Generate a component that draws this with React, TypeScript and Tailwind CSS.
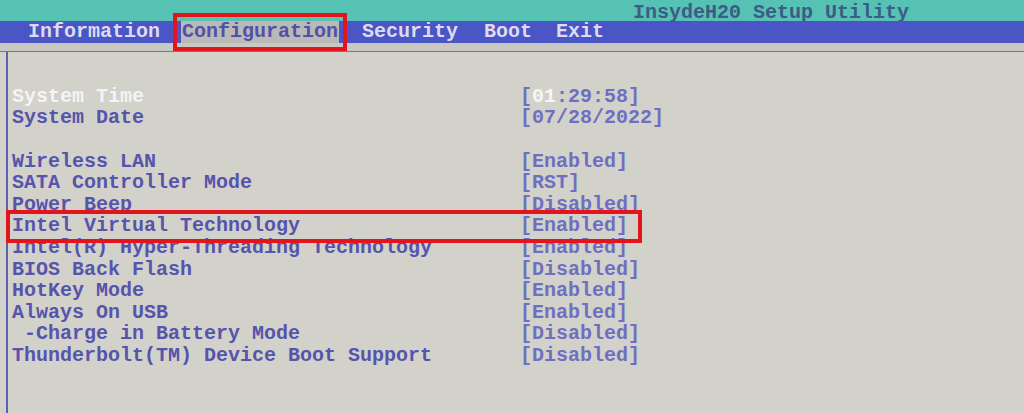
const menu = [
  { label: 'Information', gap: '' },
  { label: 'Configuration', gap: 'ml-[20px]', active: true },
  { label: 'Security', gap: 'ml-[22px]' },
  { label: 'Boot', gap: 'ml-[24px]' },
  { label: 'Exit', gap: 'ml-[22px]' },
];

type Row = { label: string; value: string; selected?: boolean; marked?: boolean } | null;

const rows: Row[] = [
  { label: 'System Time', value: '[01:29:58]', selected: true },
  { label: 'System Date', value: '[07/28/2022]' },
  null,
  { label: 'Wireless LAN', value: '[Enabled]' },
  { label: 'SATA Controller Mode', value: '[RST]' },
  { label: 'Power Beep', value: '[Disabled]' },
  { label: 'Intel Virtual Technology', value: '[Enabled]', marked: true },
  { label: 'Intel(R) Hyper-Threading Technology', value: '[Enabled]' },
  { label: 'BIOS Back Flash', value: '[Disabled]' },
  { label: 'HotKey Mode', value: '[Enabled]' },
  { label: 'Always On USB', value: '[Enabled]' },
  { label: ' -Charge in Battery Mode', value: '[Disabled]' },
  { label: 'Thunderbolt(TM) Device Boot Support', value: '[Disabled]' },
];

function Value({ text, selected }: { text: string; selected?: boolean }) {
  if (selected) {
    // the hour field is the one being edited
    return (
      <span>
        [<span className="text-[#f6f6f6]">01</span>:29:58]
      </span>
    );
  }
  return <span>{text}</span>;
}

export default function App() {
  return (
    <div className="w-[1024px] h-[413px] overflow-hidden bg-[#d2d1ca] font-['Liberation_Mono',monospace] font-bold text-[20px] flex flex-col">
      <div className="h-[21px] shrink-0 bg-[#55c2b3] pl-[633px] pt-[4px] flex items-center text-[#3d5b86] leading-none">
        InsydeH20 Setup Utility
      </div>
      <nav className="h-[22px] shrink-0 bg-[#4a55c6] flex items-stretch pl-[27px] text-[#dcdcee]">
        {menu.map((m) => (
          <div
            key={m.label}
            className={`${m.gap} flex items-center px-[1px] leading-none ${
              m.active ? 'relative z-10 bg-[#bab9b5] text-[#5150aa] outline-4 outline-[#e3141b] outline-offset-[4px]' : ''
            }`}
          >
            {m.label}
          </div>
        ))}
      </nav>
      <div className="h-[9px] shrink-0 bg-[#c9c8c2] border-b border-[#70749c]" />
      <div className="flex-1 ml-[6px] border-l-2 border-[#5a5fb2] pt-[34px] pl-[4px]">
        {rows.map((r, i) =>
          r ? (
            <div
              key={i}
              className={`flex h-[21.6px] items-center w-[624px] whitespace-pre leading-none ${
                r.marked ? 'relative z-10 outline-4 outline-[#e3141b] outline-offset-[2px]' : ''
              }`}
            >
              <span className={`w-[508px] shrink-0 ${r.selected ? 'text-[#f4f4f4]' : 'text-[#5654ac]'}`}>{r.label}</span>
              <span className="text-[#6f6fc2]">
                <Value text={r.value} selected={r.selected} />
              </span>
            </div>
          ) : (
            <div key={i} className="h-[21.6px]" />
          )
        )}
      </div>
    </div>
  );
}
